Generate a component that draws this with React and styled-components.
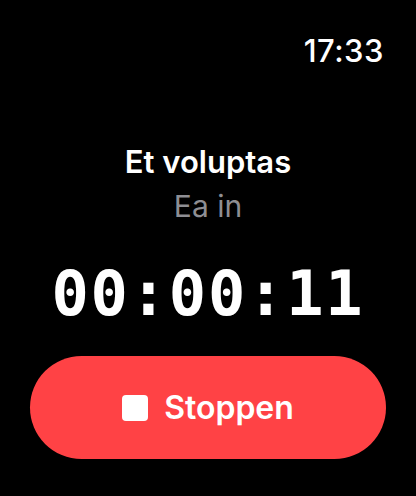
import React from 'react';
import styled, { createGlobalStyle } from 'styled-components';

const GlobalStyle = createGlobalStyle`
  html, body {
    margin: 0;
    padding: 0;
    background: #000;
  }
  body {
    font-family: Inter, "Noto Sans", sans-serif;
    color: #fff;
  }
`;

const Screen = styled.div`
  width: 416px;
  height: 496px;
  background: #000;
  display: flex;
  flex-direction: column;
  box-sizing: border-box;
  padding: 34px 30px 0;
`;

const StatusBar = styled.div`
  display: flex;
  justify-content: flex-end;
  padding-right: 2px;
`;

const Clock = styled.span`
  font-size: 31px;
  font-weight: 500;
  line-height: 34px;
  letter-spacing: 0.5px;
`;

const Info = styled.div`
  display: flex;
  flex-direction: column;
  align-items: center;
  margin-top: 74px;
`;

const Title = styled.div`
  font-size: 31px;
  font-weight: 600;
  line-height: 40px;
`;

const Subtitle = styled.div`
  font-size: 30px;
  font-weight: 400;
  color: #8e8e93;
  line-height: 48px;
`;

const Timer = styled.div`
  font-family: "DejaVu Sans Mono", "Liberation Mono", monospace;
  font-size: 62px;
  font-weight: 700;
  line-height: 80px;
  text-align: center;
  margin-top: 24px;
  letter-spacing: 1.8px;
`;

const StopButton = styled.button`
  margin-top: 22px;
  height: 103px;
  width: 356px;
  border: none;
  border-radius: 52px;
  background: #ff4245;
  color: #fff;
  display: flex;
  align-items: center;
  justify-content: center;
  gap: 16px;
  font-family: Inter, "Noto Sans", sans-serif;
  font-size: 32px;
  font-weight: 600;
  padding: 0;
`;

const StopIcon = styled.span`
  width: 26px;
  height: 26px;
  border-radius: 4px;
  background: #fff;
`;

export default function App() {
  return (
    <>
      <GlobalStyle />
      <Screen>
        <StatusBar>
          <Clock>17:33</Clock>
        </StatusBar>
        <Info>
          <Title>Et voluptas</Title>
          <Subtitle>Ea in</Subtitle>
        </Info>
        <Timer>00:00:11</Timer>
        <StopButton>
          <StopIcon />
          Stoppen
        </StopButton>
      </Screen>
    </>
  );
}
